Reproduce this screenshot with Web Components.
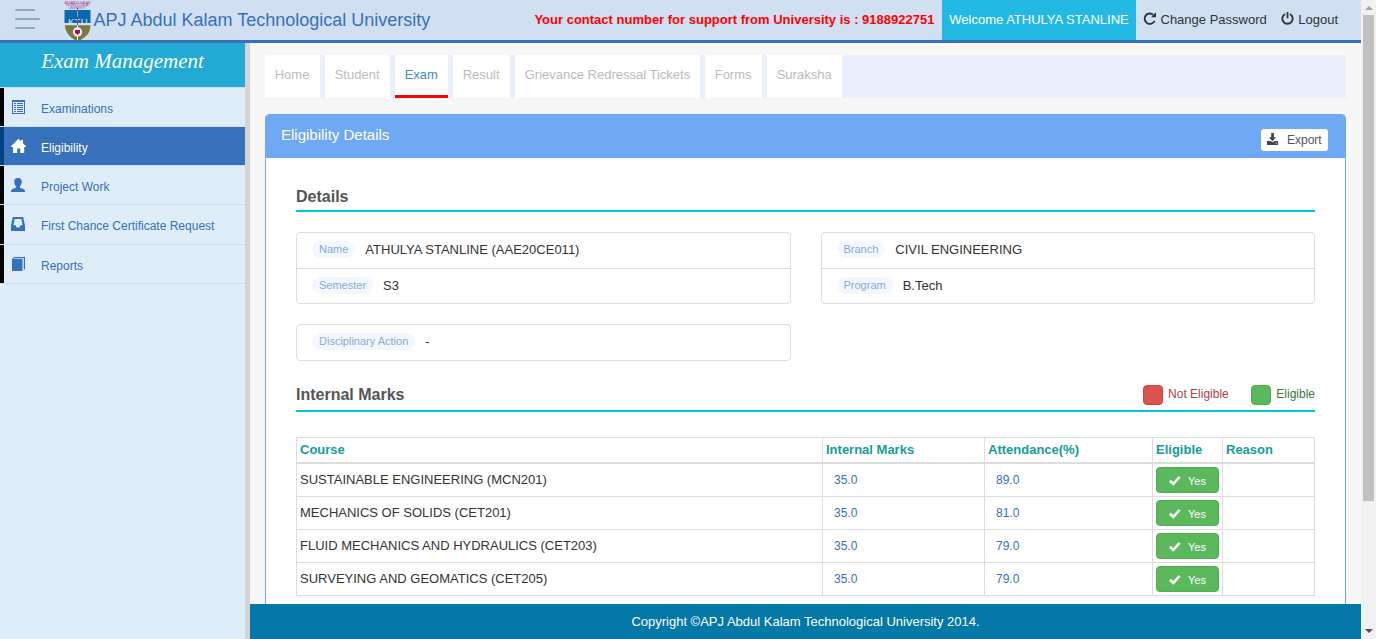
<!DOCTYPE html>
<html lang="en"><head><meta charset="utf-8"><title>Exam Management</title>
<style>
html,body{margin:0;height:100%;overflow:hidden}
body{font-family:"Liberation Sans",Arial,sans-serif;font-size:13px;color:#333;background:#f7f7f7}
</style></head><body>
<ktu-app></ktu-app>
<script>
const define=(name,css,html)=>customElements.define(name,class extends HTMLElement{
  constructor(){super();const t=document.createElement('template');
    t.innerHTML='<style>*{box-sizing:border-box}'+css+'</style>'+(typeof html==='function'?html(this):html);
    this.attachShadow({mode:'open'}).append(t.content.cloneNode(true));}
});
const icons={
  list:'<path d="M1 0h13v14H1z"/><path fill="#dfedf8" d="M2 2h11v11H2z"/><path d="M3 3h2v1H3zM6 3h6v1H6zM3 5h2v1H3zM6 5h6v1H6zM3 7h2v1H3zM6 7h6v1H6zM3 9h2v1H3zM6 9h6v1H6zM3 11h2v1H3zM6 11h6v1H6z"/>',
  home:'<path d="M7.500-.3 10 2.200V1h2v3.200L15 7.300v.7h-1.800v6H9.300V9.500H6.200V14H2V8H0v-.7z"/>',
  user:'<path d="M7 0c2.600 0 3.900 1.500 3.800 4-.1 2-1 3.300-1.900 4.400-.2 1 .3 1.500 1.300 1.900 2.500.9 3.900 1.300 3.900 3.700H-.1c0-2.400 1.400-2.800 3.900-3.700 1-.4 1.500-.9 1.300-1.900C4.200 7.300 3.300 6 3.200 4 3.100 1.500 4.400 0 7 0z"/>',
  inbox:'<path fill-rule="evenodd" d="M1.800 0h10.400L14 8.500V14H0V8.500zM3.600 1.900 2.400 8.300h2.200l.9 2.200h3l.9-2.200h2.200L10.400 1.900z"/>',
  book:'<path d="M3 0h11v12.500h-1.200V1.200H3.200l-.9.900h9.200V14H1V2z"/>',
  repeat:'<path fill="none" stroke="currentColor" stroke-width="1.900" d="M11.600 8.800A5.200 5.200 0 1 1 10.300 2.800"/><path d="M13 .2v5H8z"/>',
  off:'<path fill="none" stroke="currentColor" stroke-width="1.900" d="M4.100 2a5.200 5.200 0 1 0 4.800 0"/><path d="M5.600 0h1.800v6.300H5.600z"/>',
  save:'<path d="M4.200 0h2.700v4.300h2.200L5.500 8.300 2 4.300h2.200zM0 8h3.600l1.900 1.300L7.500 8H11v4H0z"/><path fill="#fff" d="M8.500 9.600h1.200v.8H8.500z"/>',
  ok:'<path d="M0 5.800 1.900 3.800 4.300 6.100 9.700 0l1.900 1.800L4.400 9.800z"/>'
};
define('ktu-icon',':host{display:block;line-height:0}svg{display:block;overflow:visible;fill:currentColor}',
  el=>{const w=el.getAttribute('w')||14,h=el.getAttribute('h')||14;return `<svg width="${w}" height="${h}" viewBox="0 0 ${w} ${h}">${icons[el.getAttribute('name')]}</svg>`});

define('ktu-logo',':host{display:block}svg{display:block}',`
<svg width="27" height="40" viewBox="0 0 27 40">
<g font-family="Liberation Sans,sans-serif" font-size="3.400" fill="#a4508e" text-anchor="middle"><text x="13.500" y="3.600" textLength="26">APJ ABDUL KALAM</text><text x="13.500" y="6.300" textLength="24">TECHNOLOGICAL</text><text x="13.500" y="9" textLength="18">UNIVERSITY</text></g>
<path d="M.5 10h26v13H.5z" fill="#0868b2"/><path d="M1 25.300h25.500c0 7-4 11.700-10 14.700h-5.500C5.500 37 1.200 32 1 25.300z" fill="#7d7840"/>
<text x="4" y="24.800" font-family="Liberation Sans,sans-serif" font-size="9.500" textLength="19.500" fill="#d5e8fa">KTU</text>
<path d="M13.500 8v17" stroke="#9a2359" stroke-width=".9"/><path d="M13.500 10v7" stroke="#c8d5ea" stroke-width=".6"/><circle cx="13.500" cy="32" r="4.700" fill="#f5edf1"/><path d="M11 30h5v2.800l-2.500 2-2.500-2z" fill="#a50d58"/><path d="M13.500 25v5m0 6v4" stroke="#fff"/></svg>`);

define('ktu-header',`:host{display:flex;height:43px;background:#d0e0f2;border-bottom:3px solid #3770bb;line-height:40px;white-space:nowrap}
.m{width:25px;margin:9px 24px 0 15px;display:grid;gap:7px;align-content:start}.m i{height:2px;background:#93a9bb;width:20px;border-radius:1px}.m i:nth-child(2){width:25px}
.t{font-size:18px;color:#3770bb;margin-left:2.500px;flex:1}.c{font-weight:bold;color:#f00;margin-right:7.600px}
.w{width:194px;background:#22b9e5;color:#fff;text-align:center}.a{display:flex;width:225px;padding-left:7.500px;color:#333}ktu-icon{margin:12px 4.500px 0 -.5px}.a span{margin-right:14.500px}`,
`<div class="m"><i></i><i></i><i></i></div><ktu-logo></ktu-logo><div class="t">APJ Abdul Kalam Technological University</div><div class="c">Your contact number for support from University is : 9188922751</div><div class="w">Welcome ATHULYA STANLINE</div><div class="a"><ktu-icon name="repeat" w="13" h="13"></ktu-icon><span>Change Password</span><ktu-icon name="off" w="13" h="13"></ktu-icon>Logout</div>`);

define('ktu-menu-item',`:host{display:flex;height:39px;border-top:1px solid #cadff2;color:#3770bb;font-size:12px;line-height:43px;white-space:nowrap}
:host([tall]){height:40px}.b{width:4px;background:#000}ktu-icon{width:14px;margin:12px 16px 0 7px}
:host([active]){color:#fff;background:#3770bb}:host([active]) .b{background:#004182}`,
el=>`<div class="b"></div><ktu-icon name="${el.getAttribute('icon')}"></ktu-icon><slot></slot>`);
define('ktu-sidebar',`:host{display:block;width:250px;background:#dfedf8;border-right:5px solid #d4d4d4}
h1{margin:0;height:44px;background:#22aad5;color:#fff;font:italic 21px/37px "Liberation Serif",serif;text-align:center}nav{border-bottom:1px solid #cadff2}`,
`<h1>Exam Management</h1><nav><ktu-menu-item icon="list">Examinations</ktu-menu-item><ktu-menu-item icon="home" active>Eligibility</ktu-menu-item><ktu-menu-item icon="user">Project Work</ktu-menu-item><ktu-menu-item icon="inbox" tall>First Chance Certificate Request</ktu-menu-item><ktu-menu-item icon="book">Reports</ktu-menu-item></nav>`);

define('ktu-tab',`:host{display:block;height:43px;background:#fff;color:#bbb;line-height:39px;padding-left:9.700px;white-space:nowrap}:host([active]){color:#428bca;border-bottom:3px solid #f00}`,'<slot></slot>');
define('ktu-tabs',`:host{display:grid;grid-template-columns:55px 65px 53px 57px 185px 57px 75px;gap:5px;height:43px;background:#e9f0fc}`,'<slot></slot>');

define('ktu-field',`:host{display:flex;height:35px;padding:8px 15px 0;line-height:17px;border-top:1px solid #ddd;white-space:nowrap}
:host(:first-child){border-top:0}b{font-weight:normal;font-size:11px;color:#85a9dc;background:#f3f8fe;border-radius:9px;height:17px;padding:0 7px;margin-right:10px}`,
el=>`<b>${el.getAttribute('label')}</b><slot></slot>`);
define('ktu-fields',':host{display:block;border:1px solid #ddd;border-radius:4px}','<slot></slot>');
define('ktu-section-title',`:host{display:flex;border-bottom:2px solid #00c8ce;height:30px;justify-content:space-between}
h2{margin:0;font-size:16px;line-height:26px;color:#555}:host([low]) h2{line-height:30px}`,'<h2><slot></slot></h2><slot name="end"></slot>');
define('ktu-key',`:host{display:flex;font-size:12px;line-height:19px;color:#a94442;white-space:nowrap}i{width:20px;height:20px;border-radius:4px;border:1px solid #d43f3a;background:#d9534f;margin-right:5px}
:host([ok]){color:#3c763d}:host([ok]) i{border-color:#4cae4c;background:#5cb85c}`,'<i></i><slot></slot>');
define('ktu-yes',`:host{display:flex;width:63px;height:26px;border:1px solid #4cae4c;border-radius:4px;background:#5cb85c;color:#fff;font-size:11px;line-height:27px;padding-left:12px}ktu-icon{margin:8px 7px 0 0}`,
'<ktu-icon name="ok" w="12" h="10"></ktu-icon>Yes');

const rows=[['SUSTAINABLE ENGINEERING (MCN201)','89.0'],['MECHANICS OF SOLIDS (CET201)','81.0'],['FLUID MECHANICS AND HYDRAULICS (CET203)','79.0'],['SURVEYING AND GEOMATICS (CET205)','79.0']];
define('ktu-marks',`:host{display:block;border:1px solid #ddd;border-width:1px 0 0 1px;background:#fff}
.r{display:grid;grid-template:33px / 526px 162px 168px 70px 92px}.r>*{height:100%;border:1px solid #ddd;border-width:0 1px 1px 0;padding-left:3px;line-height:31px;white-space:nowrap}
.h{grid-template-rows:26px;font-weight:bold;color:#169c98}.h>*{border-bottom-width:2px;line-height:23px}.r>.n{font-size:12px;color:#3770bb;padding-left:11px;line-height:32px}ktu-yes{margin-top:3px}`,
`<div class="r h"><div>Course</div><div>Internal Marks</div><div>Attendance(%)</div><div>Eligible</div><div>Reason</div></div>`+
rows.map(([c,a])=>`<div class="r"><div>${c}</div><div class="n">35.0</div><div class="n">${a}</div><div><ktu-yes></ktu-yes></div><div></div></div>`).join(''));

define('ktu-panel',`:host{display:block;border:1px solid #6fa9f5;border-radius:4px 4px 0 0;background:#fff;height:600px}
header{height:43px;background:#6fa9f5;display:flex;justify-content:space-between;color:#fff;font-size:15px;line-height:40px;padding:0 17px 0 15px;border-radius:3px 3px 0 0}
button{font:12px/22px "Liberation Sans",sans-serif;width:67px;height:22px;margin-top:14px;border:0;border-radius:3px;background:#fff;color:#555;padding:0 0 0 6px;display:flex}button ktu-icon{margin:4px 9px 0 0;color:#444}
main{padding:24px 30px 0}`,
`<header><span><slot name="title"></slot></span><button><ktu-icon name="save" w="11" h="12"></ktu-icon>Export</button></header><main><slot></slot></main>`);

define('ktu-scrollbar',`:host{display:flex;flex-direction:column;width:15px;background:#f1f1f1;align-items:center}
i{border:4px solid transparent;border-top:0;border-bottom:4px solid #a3a3a3;margin:6px 0 5px}.t{width:11px;height:486px;background:#c1c1c1}i.d{border:4px solid transparent;border-bottom:0;border-top-color:#505050;margin:auto 0 6px}`,
'<i></i><div class="t"></div><i class="d"></i>');

define('ktu-app',`:host{display:flex;height:639px;width:1376px}
.page{width:1361px;display:flex;flex-direction:column}.body{display:flex;flex:1;min-height:0}
.main{flex:1;display:flex;flex-direction:column;min-width:0}.scroll{flex:1;min-height:0;overflow:hidden;padding:12px 15px 0}
ktu-panel{margin-top:16px}.g{display:grid;grid-template-columns:494.500px 494.500px;gap:20px 30px;margin:20px 0 21px}
.k{display:flex;gap:22.500px;padding-top:3px}ktu-marks{margin-top:25px}
footer{height:35px;background:#0478a6;color:#fff;text-align:center;line-height:35px}`,
`<div class="page"><ktu-header></ktu-header><div class="body"><ktu-sidebar></ktu-sidebar><div class="main"><div class="scroll">
<ktu-tabs><ktu-tab>Home</ktu-tab><ktu-tab>Student</ktu-tab><ktu-tab active>Exam</ktu-tab><ktu-tab>Result</ktu-tab><ktu-tab>Grievance Redressal Tickets</ktu-tab><ktu-tab>Forms</ktu-tab><ktu-tab>Suraksha</ktu-tab></ktu-tabs>
<ktu-panel><span slot="title">Eligibility Details</span>
<ktu-section-title low>Details</ktu-section-title>
<div class="g"><ktu-fields><ktu-field label="Name">ATHULYA STANLINE (AAE20CE011)</ktu-field><ktu-field label="Semester">S3</ktu-field></ktu-fields>
<ktu-fields><ktu-field label="Branch">CIVIL ENGINEERING</ktu-field><ktu-field label="Program">B.Tech</ktu-field></ktu-fields>
<ktu-fields><ktu-field label="Disciplinary Action">-</ktu-field></ktu-fields></div>
<ktu-section-title>Internal Marks<div slot="end" class="k"><ktu-key>Not Eligible</ktu-key><ktu-key ok>Eligible</ktu-key></div></ktu-section-title>
<ktu-marks></ktu-marks></ktu-panel></div>
<footer>Copyright ©APJ Abdul Kalam Technological University 2014.</footer></div></div></div><ktu-scrollbar></ktu-scrollbar>`);
</script></body></html>
